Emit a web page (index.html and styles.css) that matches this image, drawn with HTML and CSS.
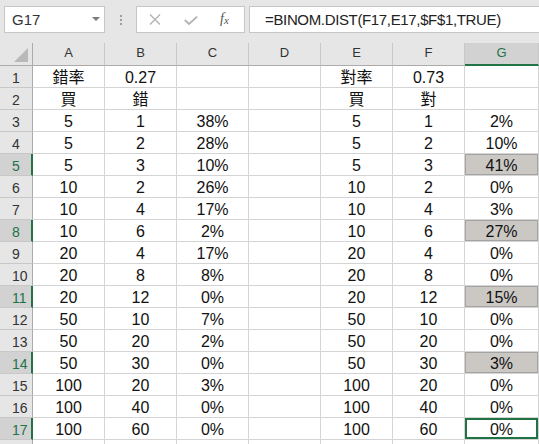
FILE: index.html
```html
<!DOCTYPE html>
<html>
<head>
<meta charset="utf-8">
<link rel="stylesheet" href="styles.css">
</head>
<body>
<div class="toolbar">
  <div class="namebox"><span class="name">G17</span><span class="drop"></span></div>
  <div class="dots"><i></i><i></i><i></i></div>
  <div class="fxbox">
    <svg class="ico-x" width="12" height="11" viewBox="0 0 12 11"><path d="M1 0.5 L11 10.5 M11 0.5 L1 10.5" stroke="#b3b3b3" stroke-width="1.4" fill="none"/></svg>
    <svg class="ico-ok" width="14" height="9" viewBox="0 0 14 9"><path d="M0.8 4 L5 8 L13.2 0.6" stroke="#b3b3b3" stroke-width="1.8" fill="none"/></svg>
    <span class="fx">f<sub>x</sub></span>
  </div>
  <div class="formula">=BINOM.DIST(F17,E17,$F$1,TRUE)</div>
</div>
<div class="sheet">
  <div class="hd corner"><svg width="15" height="15" viewBox="0 0 15 15"><polygon points="14,0 14,14 0,14" fill="#b9b9b9"/></svg></div>
  <div class="hd col">A</div><div class="hd col">B</div><div class="hd col">C</div><div class="hd col">D</div><div class="hd col">E</div><div class="hd col">F</div><div class="hd col sel">G</div>

  <div class="hd row">1</div><div class="c">錯率</div><div class="c">0.27</div><div class="c"></div><div class="c"></div><div class="c">對率</div><div class="c">0.73</div><div class="c"></div>
  <div class="hd row">2</div><div class="c">買</div><div class="c">錯</div><div class="c"></div><div class="c"></div><div class="c">買</div><div class="c">對</div><div class="c"></div>
  <div class="hd row">3</div><div class="c">5</div><div class="c">1</div><div class="c">38%</div><div class="c"></div><div class="c">5</div><div class="c">1</div><div class="c">2%</div>
  <div class="hd row">4</div><div class="c">5</div><div class="c">2</div><div class="c">28%</div><div class="c"></div><div class="c">5</div><div class="c">2</div><div class="c">10%</div>
  <div class="hd row sel">5</div><div class="c">5</div><div class="c">3</div><div class="c">10%</div><div class="c"></div><div class="c">5</div><div class="c">3</div><div class="c hl">41%</div>
  <div class="hd row">6</div><div class="c">10</div><div class="c">2</div><div class="c">26%</div><div class="c"></div><div class="c">10</div><div class="c">2</div><div class="c">0%</div>
  <div class="hd row">7</div><div class="c">10</div><div class="c">4</div><div class="c">17%</div><div class="c"></div><div class="c">10</div><div class="c">4</div><div class="c">3%</div>
  <div class="hd row sel">8</div><div class="c">10</div><div class="c">6</div><div class="c">2%</div><div class="c"></div><div class="c">10</div><div class="c">6</div><div class="c hl">27%</div>
  <div class="hd row">9</div><div class="c">20</div><div class="c">4</div><div class="c">17%</div><div class="c"></div><div class="c">20</div><div class="c">4</div><div class="c">0%</div>
  <div class="hd row">10</div><div class="c">20</div><div class="c">8</div><div class="c">8%</div><div class="c"></div><div class="c">20</div><div class="c">8</div><div class="c">0%</div>
  <div class="hd row sel">11</div><div class="c">20</div><div class="c">12</div><div class="c">0%</div><div class="c"></div><div class="c">20</div><div class="c">12</div><div class="c hl">15%</div>
  <div class="hd row">12</div><div class="c">50</div><div class="c">10</div><div class="c">7%</div><div class="c"></div><div class="c">50</div><div class="c">10</div><div class="c">0%</div>
  <div class="hd row">13</div><div class="c">50</div><div class="c">20</div><div class="c">2%</div><div class="c"></div><div class="c">50</div><div class="c">20</div><div class="c">0%</div>
  <div class="hd row sel">14</div><div class="c">50</div><div class="c">30</div><div class="c">0%</div><div class="c"></div><div class="c">50</div><div class="c">30</div><div class="c hl">3%</div>
  <div class="hd row">15</div><div class="c">100</div><div class="c">20</div><div class="c">3%</div><div class="c"></div><div class="c">100</div><div class="c">20</div><div class="c">0%</div>
  <div class="hd row">16</div><div class="c">100</div><div class="c">40</div><div class="c">0%</div><div class="c"></div><div class="c">100</div><div class="c">40</div><div class="c">0%</div>
  <div class="hd row sel">17</div><div class="c">100</div><div class="c">60</div><div class="c">0%</div><div class="c"></div><div class="c">100</div><div class="c">60</div><div class="c active">0%</div>
  <div class="hd row"></div><div class="c"></div><div class="c"></div><div class="c"></div><div class="c"></div><div class="c"></div><div class="c"></div><div class="c"></div>
</div>
</body>
</html>
```
FILE: styles.css
```css
* { box-sizing: border-box; }
html, body { margin: 0; padding: 0; }
body {
  width: 539px;
  height: 444px;
  overflow: hidden;
  background: #fff;
  font-family: "Liberation Sans", "Noto Sans CJK TC", sans-serif;
}
.toolbar {
  height: 43px;
  background: #e6e6e6;
  display: flex;
  align-items: flex-start;
  padding: 6px 0 0 4px;
}
.namebox {
  width: 101px;
  height: 27px;
  background: #fff;
  border: 1px solid #c6c6c6;
  display: flex;
  align-items: center;
  justify-content: space-between;
  padding: 0 4px 0 7px;
}
.name {
  font-size: 15px;
  color: #333;
  line-height: 18px;
  padding-top: 1px;
}
.drop {
  width: 0;
  height: 0;
  border-left: 4px solid transparent;
  border-right: 4px solid transparent;
  border-top: 4px solid #7a7a7a;
  margin-top: -1px;
}
.dots {
  width: 31px;
  height: 27px;
  display: flex;
  flex-direction: column;
  align-items: center;
  justify-content: center;
  gap: 2px;
}
.dots i {
  display: block;
  width: 2px;
  height: 2px;
  background: #9d9d9d;
}
.fxbox {
  width: 109px;
  height: 27px;
  background: #fff;
  border: 1px solid #c6c6c6;
  display: flex;
  align-items: center;
  padding-left: 12px;
}
.ico-x { margin-right: 23px; }
.ico-ok { margin-right: 22px; margin-top: 2px; }
.fx {
  font-family: "Liberation Serif", serif;
  font-style: italic;
  font-size: 14px;
  color: #555;
  line-height: 14px;
}
.fx sub {
  font-size: 11px;
  vertical-align: -1px;
}
.formula {
  flex: 1;
  height: 27px;
  margin-left: 4px;
  background: #fff;
  border: 1px solid #c6c6c6;
  border-right: none;
  font-size: 15px;
  color: #222;
  line-height: 18px;
  padding: 4px 0 0 15px;
  white-space: nowrap;
  letter-spacing: -0.35px;
}
.sheet {
  display: grid;
  grid-template-columns: 33px repeat(6, 72px) 74px;
  grid-auto-rows: 22px;
  grid-template-rows: 23px;
}
.hd {
  background: #e6e6e6;
  color: #333;
  font-family: "Liberation Sans", sans-serif;
}
.corner {
  border-right: 1px solid #ababab;
  border-bottom: 1px solid #ababab;
  display: flex;
  align-items: flex-end;
  justify-content: flex-end;
  padding: 0 3px 2px 0;
}
.col {
  font-size: 13px;
  line-height: 18px;
  text-align: center;
  border-right: 1px solid #c8c8c8;
  border-bottom: 1px solid #ababab;
  padding-top: 1px;
}
.col.sel {
  background: #d2d2d2;
  color: #217346;
  border-bottom: 2px solid #217346;
}
.row {
  font-size: 14px;
  line-height: 18px;
  padding: 3px 0 0 12px;
  border-right: 1px solid #ababab;
  border-bottom: 1px solid #c8c8c8;
}
.row.sel {
  background: #d2d2d2;
  color: #217346;
  border-right: 2px solid #217346;
}
.c {
  font-size: 16px;
  line-height: 18px;
  padding-top: 3px;
  text-align: center;
  color: #111;
  border-right: 1px solid #d4d4d4;
  border-bottom: 1px solid #d4d4d4;
  white-space: nowrap;
}
.c.hl {
  background: #cbc8c4;
  box-shadow: inset 0 0 0 1px #a3a3a3;
}
.c.active {
  box-shadow: inset 0 0 0 2px #217346;
}
```
